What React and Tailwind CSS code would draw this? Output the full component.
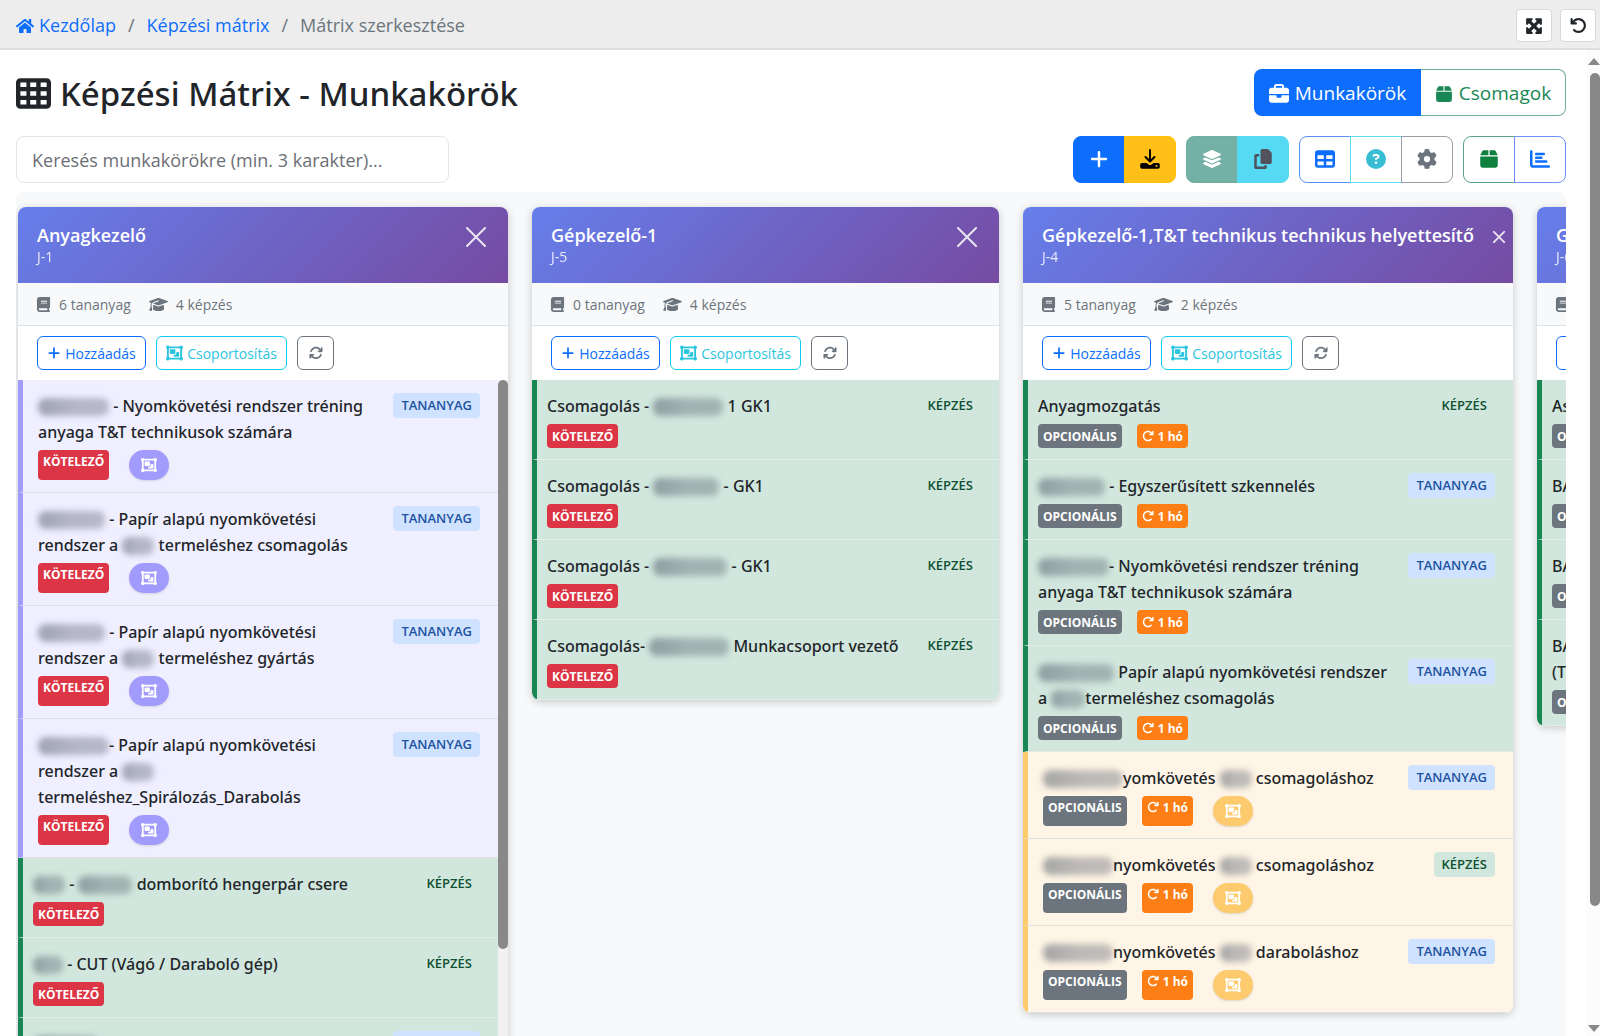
import clsx from "clsx";
import {
  FaArrowRotateLeft,
  FaArrowRotateRight,
  FaArrowsRotate,
  FaBook,
  FaBox,
  FaBriefcase,
  FaChartBar,
  FaCircleQuestion,
  FaCopy,
  FaGear,
  FaGraduationCap,
  FaLayerGroup,
  FaMaximize,
  FaObjectGroup,
  FaPlus,
  FaTable,
  FaTableCells,
} from "react-icons/fa6";
import { FaHome } from "react-icons/fa";

// A number inside a title line is the width of a masked name.
const JOBS = [
  {
    code: "J-1",
    name: "Anyagkezelő",
    materials: 6,
    trainings: 4,
    width: "w-[490px]",
    scroll: true,
    items: [
      { group: "purple", type: "TANANYAG", req: true, lines: [[71, " - Nyomkövetési rendszer tréning"], ["anyaga T&T technikusok számára"]] },
      { group: "purple", type: "TANANYAG", req: true, lines: [[67, " - Papír alapú nyomkövetési"], ["rendszer a ", 32, " termeléshez csomagolás"]] },
      { group: "purple", type: "TANANYAG", req: true, lines: [[67, " - Papír alapú nyomkövetési"], ["rendszer a ", 32, " termeléshez gyártás"]] },
      { group: "purple", type: "TANANYAG", req: true, lines: [[71, "- Papír alapú nyomkövetési"], ["rendszer a ", 32], ["termeléshez_Spirálozás_Darabolás"]] },
      { type: "KÉPZÉS", req: true, lines: [[32, " - ", 54, " domborító hengerpár csere"]] },
      { type: "KÉPZÉS", req: true, lines: [[30, " - CUT (Vágó / Daraboló gép)"]] },
      { type: "TANANYAG", req: true, lines: [[66, " - Egyszerűsített szkennelés"]] },
    ],
  },
  {
    code: "J-5",
    name: "Gépkezelő-1",
    materials: 0,
    trainings: 4,
    width: "w-[467px]",
    items: [
      { type: "KÉPZÉS", req: true, lines: [["Csomagolás - ", 70, " 1 GK1"]] },
      { type: "KÉPZÉS", req: true, lines: [["Csomagolás - ", 66, " - GK1"]] },
      { type: "KÉPZÉS", req: true, lines: [["Csomagolás - ", 74, " - GK1"]] },
      { type: "KÉPZÉS", req: true, lines: [["Csomagolás- ", 80, " Munkacsoport vezető"]] },
    ],
  },
  {
    code: "J-4",
    name: "Gépkezelő-1,T&T technikus technikus helyettesítő",
    materials: 5,
    trainings: 2,
    width: "w-[490px]",
    smallClose: true,
    items: [
      { type: "KÉPZÉS", lines: [["Anyagmozgatás"]] },
      { type: "TANANYAG", lines: [[67, " - Egyszerűsített szkennelés"]] },
      { type: "TANANYAG", lines: [[71, "- Nyomkövetési rendszer tréning"], ["anyaga T&T technikusok számára"]] },
      { type: "TANANYAG", lines: [[76, " Papír alapú nyomkövetési rendszer"], ["a ", 34, "termeléshez csomagolás"]] },
      { group: "amber", type: "TANANYAG", lines: [[80, "yomkövetés ", 32, " csomagoláshoz"]] },
      { group: "amber", type: "KÉPZÉS", lines: [[70, "nyomkövetés ", 32, " csomagoláshoz"]] },
      { group: "amber", type: "TANANYAG", lines: [[70, "nyomkövetés ", 32, " daraboláshoz"]] },
    ],
  },
  {
    code: "J-6",
    name: "Gépkezelő-2",
    materials: 4,
    trainings: 1,
    width: "w-[490px]",
    items: [
      { type: "KÉPZÉS", lines: [["Asztali darabolás"]] },
      { type: "KÉPZÉS", lines: [["BA gép kezelése"]] },
      { type: "KÉPZÉS", lines: [["BA gép beállítása"]] },
      { type: "KÉPZÉS", lines: [["BA gép karbantartása"], ["(TPM)"]] },
    ],
  },
];

function DownloadIcon() {
  return (
    <svg viewBox="0 0 20 20" className="size-5" fill="none" aria-hidden="true">
      <path d="M10 1v11M5.500 8 10 12.500 14.500 8" stroke="currentColor" strokeWidth="2" strokeLinecap="round" strokeLinejoin="round" />
      <path
        d="M2 14h4.500l2 1.500a2.500 2.500 0 0 0 3 0l2-1.500H18a1.800 1.800 0 0 1 1.800 1.800v2.200a1.800 1.800 0 0 1-1.800 1.800H2A1.800 1.800 0 0 1 .2 18v-2.200A1.800 1.800 0 0 1 2 14zm14.500 2a1 1 0 1 0 0 2 1 1 0 0 0 0-2z"
        fill="currentColor"
        fillRule="evenodd"
      />
    </svg>
  );
}

function CloseIcon({ small }) {
  return (
    <svg viewBox="0 0 20 20" className={small ? "size-3" : "size-5"} aria-hidden="true">
      <path d="M1 1l18 18M19 1L1 19" stroke="currentColor" strokeWidth={small ? 3 : 2} strokeLinecap="round" />
    </svg>
  );
}

function Masked({ width }) {
  return (
    <span
      aria-hidden="true"
      className="inline-block h-[18px] rounded-lg bg-linear-to-r from-[#4b5563]/50 via-[#6b7280]/45 to-[#4b5563]/35 align-[-4px] blur-[3px]"
      style={{ width }}
    />
  );
}

function Tag({ grouped, className, children }) {
  return (
    <span
      className={clsx(
        "inline-flex gap-1 rounded-sm px-[5px] text-[12px] font-bold leading-[23px] text-white",
        grouped ? "h-[30px]" : "h-6 items-center",
        className,
      )}
    >
      {children}
    </span>
  );
}

function Item({ item }) {
  const { group, type, req, lines } = item;
  return (
    <li
      className={clsx(
        "flex items-start justify-between border-b border-l-[5px] pt-[13px] pr-[18px]",
        !group && "border-b-[#e3ece9] border-l-[#198754] bg-[#d1e7dd] pb-[11px] pl-[10px]",
        group && "pb-3 pl-[15px]",
        group === "purple" && "border-b-[#dfdfe8] border-l-[#a29bfe] bg-[#f0efff]",
        group === "amber" && "border-b-[#dfe0e0] border-l-[#fdcb6e] bg-[#fff5e6]",
      )}
    >
      <div className="flex flex-col gap-[5px]">
        <div className="font-['Segoe_UI','Noto_Sans',sans-serif] text-[16px] font-medium leading-[26px] text-[#212529]">
          {lines.map((line, i) => (
            <div key={i} className="whitespace-pre">
              {line.map((part, j) =>
                typeof part === "number" ? <Masked key={j} width={part} /> : <span key={j}>{part}</span>,
              )}
            </div>
          ))}
        </div>
        <div className="flex items-start">
          {req ? (
            <Tag grouped={!!group} className="bg-[#dc3545]">KÖTELEZŐ</Tag>
          ) : (
            <>
              <Tag grouped={!!group} className="mr-[15px] bg-[#6c757d]">OPCIONÁLIS</Tag>
              <Tag grouped={!!group} className="bg-[#fd7e14]">
                <FaArrowRotateRight className={clsx("size-3", group && "mt-[5px]")} />
                1 hó
              </Tag>
            </>
          )}
          {group && (
            <span
              className={clsx(
                "ml-5 flex h-[30px] w-10 items-center justify-center rounded-full text-white shadow",
                group === "purple" ? "bg-[#a29bfe]" : "bg-[#fdcb6e]",
              )}
            >
              <FaObjectGroup className="size-4" />
            </span>
          )}
        </div>
      </div>
      <span
        className={clsx(
          "h-[25px] rounded px-2 text-[13px] font-semibold leading-[25px]",
          type === "TANANYAG" ? "bg-[#cfe2ff] text-[#1d52a1]" : "bg-[#d1e7dd] text-[#0f5132]",
        )}
      >
        {type}
      </span>
    </li>
  );
}

function JobCard({ job }) {
  return (
    <section className={clsx("flex-none overflow-hidden rounded-lg bg-white shadow-[0_2px_8px_rgba(0,0,0,0.2)]", job.width)}>
      <header className="flex h-[76px] items-start justify-between bg-[linear-gradient(135deg,#667eea,#764ba2)] pt-[15px] pl-[19px] text-white">
        <div className="whitespace-nowrap">
          <h2 className="text-[18px] font-semibold leading-[26px]">{job.name}</h2>
          <div className="text-[14px] leading-[18px] opacity-85">{job.code}</div>
        </div>
        <button
          type="button"
          aria-label={`${job.name} bezárása`}
          className={clsx("flex h-[30px] items-center opacity-85", job.smallClose ? "pr-2" : "pr-[22px]")}
        >
          <CloseIcon small={job.smallClose} />
        </button>
      </header>

      <div className="flex h-[43px] items-center gap-[18px] border-b border-[#dee2e6] bg-[#f8f9fa] pl-[18px] text-[14px] text-[#6c757d]">
        <span className="flex items-center gap-2">
          <FaBook className="size-[15px]" />
          {job.materials} tananyag
        </span>
        <span className="flex items-center gap-2">
          <FaGraduationCap className="h-[15px] w-[19px]" />
          {job.trainings} képzés
        </span>
      </div>

      <div className="flex h-[54px] items-center gap-[10px] pl-[19px] text-[14px]">
        <button type="button" className="flex h-[34px] w-[109px] items-center justify-center gap-1 rounded-md border border-[#0d6efd] text-[#0d6efd]">
          <FaPlus className="size-[14px]" />
          Hozzáadás
        </button>
        <button type="button" className="flex h-[34px] w-[131px] items-center justify-center gap-1 rounded-md border border-[#0dcaf0] text-[#2cc5e0]">
          <FaObjectGroup className="h-4 w-[17px]" />
          Csoportosítás
        </button>
        <button type="button" aria-label="Frissítés" className="flex h-[34px] w-[37px] items-center justify-center rounded-md border border-[#6c757d] text-[#6c757d]">
          <FaArrowsRotate className="size-[14px]" />
        </button>
      </div>

      <div className="flex">
        <ul className="min-w-0 flex-1">
          {job.items.map((item, i) => (
            <Item key={i} item={item} />
          ))}
        </ul>
        {job.scroll && (
          <div className="w-[10px] flex-none bg-[#f1f1f1]">
            <div className="h-[569px] rounded-full bg-[#888]" />
          </div>
        )}
      </div>
    </section>
  );
}

function ToolGroup({ children }) {
  return <div className="flex h-[47px]">{children}</div>;
}

function Tool({ label, className, children }) {
  return (
    <button
      type="button"
      aria-label={label}
      className={clsx(
        "-ml-px flex w-[52px] items-center justify-center border text-[20px] first:ml-0 first:rounded-l-lg last:rounded-r-lg",
        className,
      )}
    >
      {children}
    </button>
  );
}

export default function App() {
  return (
    <div className="flex h-screen flex-col overflow-hidden bg-white font-['Segoe_UI','Open_Sans','Noto_Sans',sans-serif] text-[#212529]">
      <div className="flex h-[50px] flex-none items-center justify-between border-b-2 border-[#dcdfdf] bg-[#ededed] pt-[3px] pr-1 pl-4">
        <nav aria-label="Breadcrumb" className="flex items-center gap-3 text-[18px]">
          <a href="#" className="flex items-center gap-[5px] text-[#0d6efd]">
            <FaHome className="size-[18px]" />
            Kezdőlap
          </a>
          <span className="text-[#6c757d]">/</span>
          <a href="#" className="text-[#0d6efd]">Képzési mátrix</a>
          <span className="text-[#6c757d]">/</span>
          <span className="text-[#6c757d]">Mátrix szerkesztése</span>
        </nav>
        <div className="flex gap-2">
          <button type="button" aria-label="Teljes képernyő" className="flex h-[33px] w-9 items-center justify-center rounded-sm border border-[#d5d8dc] bg-white">
            <FaMaximize className="size-[18px]" />
          </button>
          <button type="button" aria-label="Visszaállítás" className="flex h-[33px] w-9 items-center justify-center rounded-sm border border-[#d5d8dc] bg-white">
            <FaArrowRotateLeft className="size-[17px]" />
          </button>
        </div>
      </div>

      <div className="flex min-h-0 flex-1">
        <main className="flex min-w-0 flex-1 flex-col pt-[19px] pr-5 pl-4">
          <div className="flex h-[47px] flex-none items-center justify-between">
            <h1 className="flex items-center gap-[9px] pt-[2px] font-['Segoe_UI','Noto_Sans',sans-serif] text-[33px] font-medium leading-[47px]">
              <FaTableCells className="size-[35px]" />
              Képzési Mátrix - Munkakörök
            </h1>
            <div className="flex h-[47px] text-[19px]">
              <button type="button" className="flex w-[167px] items-center justify-center gap-[6px] rounded-l-lg bg-[#0d6efd] pt-[2px] text-white">
                <FaBriefcase className="size-5" />
                Munkakörök
              </button>
              <button type="button" className="flex w-[145px] items-center justify-center gap-[6px] rounded-r-lg border border-l-0 border-[#6dad90] pt-[2px] text-[#198754]">
                <FaBox className="size-[18px]" />
                Csomagok
              </button>
            </div>
          </div>

          <div className="mt-[19px] flex h-12 flex-none items-center justify-between">
            <input
              type="text"
              aria-label="Keresés munkakörökre"
              placeholder="Keresés munkakörökre (min. 3 karakter)..."
              className="h-[47px] w-[433px] rounded-lg border border-[#e3e5e8] px-[15px] pt-[2px] text-[18px] placeholder:text-[#6c6f75]"
            />
            <div className="flex gap-[10px]">
              <ToolGroup>
                <Tool label="Új munkakör" className="border-[#0d6efd] bg-[#0d6efd] text-white">
                  <FaPlus />
                </Tool>
                <Tool label="Letöltés" className="border-[#ffc107] bg-[#ffc117] text-black">
                  <DownloadIcon />
                </Tool>
              </ToolGroup>
              <ToolGroup>
                <Tool label="Rétegek" className="border-[#6fae9c] bg-[#74b0a6] text-white">
                  <FaLayerGroup />
                </Tool>
                <Tool label="Másolás" className="border-[#56d9f2] bg-[#56d9f2] text-[#51525c]">
                  <FaCopy />
                </Tool>
              </ToolGroup>
              <ToolGroup>
                <Tool label="Táblázat" className="border-[#5b93f5] text-[#0d6efd]">
                  <FaTable />
                </Tool>
                <Tool label="Súgó" className="border-[#5fdaf2] text-[#38bdd3]">
                  <FaCircleQuestion />
                </Tool>
                <Tool label="Beállítások" className="border-[#989da6] text-[#6c757d]">
                  <FaGear />
                </Tool>
              </ToolGroup>
              <ToolGroup>
                <Tool label="Csomagok" className="border-[#5ba685] text-[#10803f]">
                  <FaBox />
                </Tool>
                <Tool label="Statisztika" className="border-[#6f8ff7] text-[#0d6efd]">
                  <FaChartBar />
                </Tool>
              </ToolGroup>
            </div>
          </div>

          <div className="mt-[9px] flex min-h-0 flex-1 items-start gap-6 overflow-hidden rounded-t-lg bg-[#f8f9fa] pt-[15px] pl-[2px]">
            {JOBS.map((job) => (
              <JobCard key={job.code} job={job} />
            ))}
          </div>
        </main>

        <div className="flex w-[14px] flex-none flex-col items-end overflow-hidden bg-[#fcfcfc] pt-2 pb-1">
          <svg viewBox="0 0 12 7" className="h-[7px] w-3" aria-hidden="true">
            <path d="M0 7 6 0l6 7z" fill="#888" />
          </svg>
          <div className="mt-2 h-[833px] w-[10px] rounded-full bg-[#888]" />
          <svg viewBox="0 0 12 7" className="mt-auto h-[7px] w-3" aria-hidden="true">
            <path d="M0 0h12L6 7z" fill="#888" />
          </svg>
        </div>
      </div>
    </div>
  );
}
